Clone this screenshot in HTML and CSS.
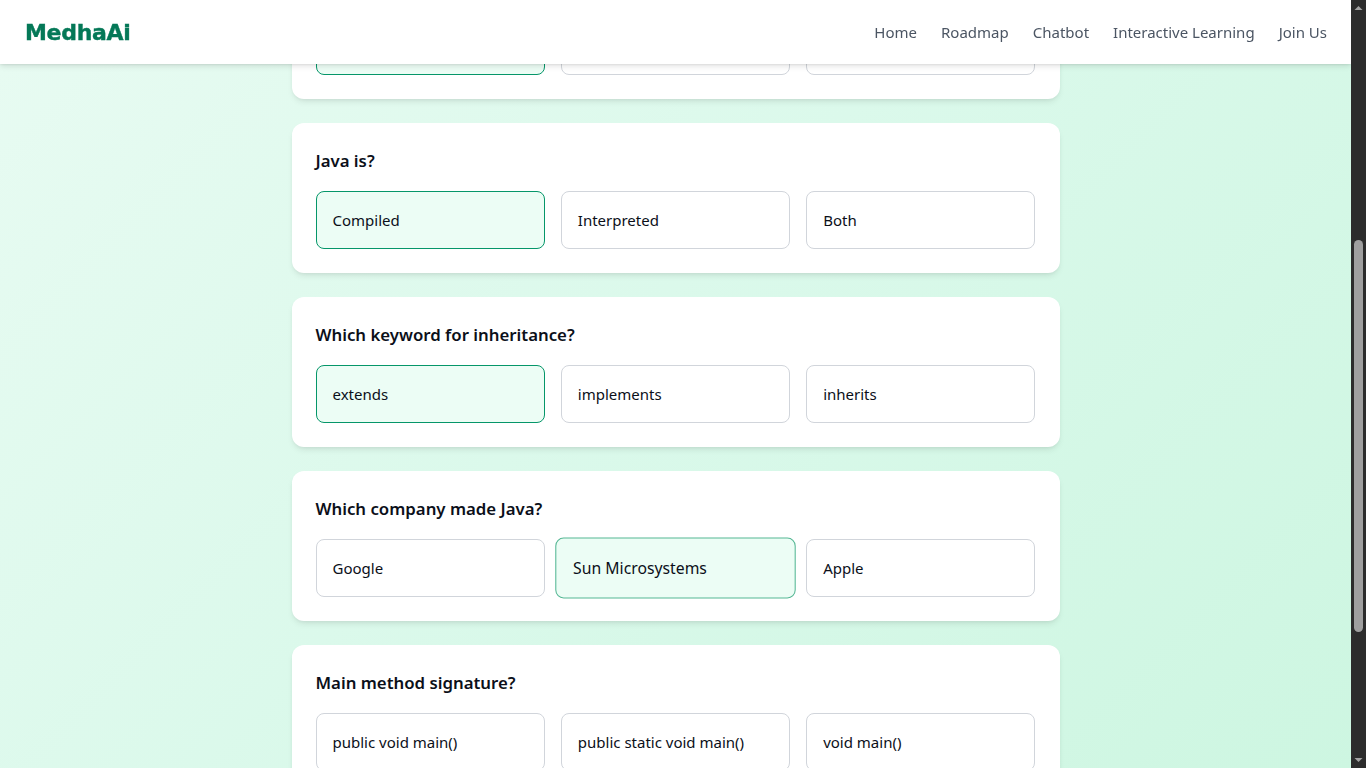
FILE: index.html
```html
<!DOCTYPE html>
<html lang="en">
<head>
<meta charset="utf-8">
<title>MedhaAi – Java Quiz</title>
<link rel="stylesheet" href="styles.css">
</head>
<body>
<header class="navbar">
  <div class="logo">MedhaAi</div>
  <nav class="nav-links">
    <a href="#">Home</a>
    <a href="#">Roadmap</a>
    <a href="#">Chatbot</a>
    <a href="#">Interactive Learning</a>
    <a href="#">Join Us</a>
  </nav>
</header>
<main class="quiz">
  <section class="question-card">
    <h2 class="question">What does JVM stand for?</h2>
    <div class="options">
      <button class="option selected">Java Virtual Machine</button>
      <button class="option">Java Variable Method</button>
      <button class="option">Java Visual Model</button>
    </div>
  </section>
  <section class="question-card">
    <h2 class="question">Java is?</h2>
    <div class="options">
      <button class="option selected">Compiled</button>
      <button class="option">Interpreted</button>
      <button class="option">Both</button>
    </div>
  </section>
  <section class="question-card">
    <h2 class="question">Which keyword for inheritance?</h2>
    <div class="options">
      <button class="option selected">extends</button>
      <button class="option">implements</button>
      <button class="option">inherits</button>
    </div>
  </section>
  <section class="question-card">
    <h2 class="question">Which company made Java?</h2>
    <div class="options">
      <button class="option">Google</button>
      <button class="option selected hovered">Sun Microsystems</button>
      <button class="option">Apple</button>
    </div>
  </section>
  <section class="question-card">
    <h2 class="question">Main method signature?</h2>
    <div class="options">
      <button class="option">public void main()</button>
      <button class="option">public static void main()</button>
      <button class="option">void main()</button>
    </div>
  </section>
</main>
<div class="scrollbar" aria-hidden="true">
  <svg class="scroll-arrow" width="15" height="15" viewBox="0 0 15 15"><path d="M3.5 10 L7.5 6 L11.5 10 Z" fill="#a3a3a3"/></svg>
  <div class="scroll-thumb"></div>
  <svg class="scroll-arrow down" width="15" height="15" viewBox="0 0 15 15"><path d="M3.5 5 L7.5 9 L11.5 5 Z" fill="#a3a3a3"/></svg>
</div>
<script src="script.js"></script>
</body>
</html>
```

FILE: styles.css
```css
* { box-sizing: border-box; }

body {
  margin: 0;
  padding-right: 15px;
  font-family: "Noto Sans", "Open Sans", sans-serif;
  color: #111827;
  background: linear-gradient(135deg, #e8fbf2 0%, #dbf9eb 45%, #cdf6e1 100%) fixed;
  min-height: 100vh;
}

.navbar {
  position: fixed;
  top: 0;
  left: 0;
  right: 15px;
  height: 64px;
  background: #ffffff;
  display: flex;
  align-items: center;
  justify-content: space-between;
  padding: 0 24px 0 25px;
  box-shadow: 0 2px 6px rgba(0, 0, 0, 0.12), 0 1px 2px rgba(0, 0, 0, 0.06);
  z-index: 10;
}

.logo {
  font-family: "DejaVu Sans", Verdana, sans-serif;
  font-weight: 700;
  font-size: 22px;
  letter-spacing: -0.3px;
  color: #047857;
  -webkit-text-stroke: 0.4px #047857;
}

.nav-links {
  display: flex;
  gap: 24px;
}

.nav-links a {
  color: #4b5563;
  text-decoration: none;
  font-size: 15px;
  line-height: 24px;
}

.quiz {
  width: 768px;
  margin: 0 auto;
  padding: 390px 0 210px;
  display: flex;
  flex-direction: column;
  gap: 24px;
}

.question-card {
  background: #ffffff;
  border-radius: 12px;
  padding: 24px;
  box-shadow: 0 4px 6px -1px rgba(0, 0, 0, 0.08), 0 2px 4px -2px rgba(0, 0, 0, 0.08);
}

.question {
  margin: 0 0 16px;
  font-size: 16.8px;
  line-height: 28px;
  font-weight: 600;
  color: #0b0f19;
}

.options {
  display: grid;
  grid-template-columns: repeat(3, 1fr);
  gap: 16px;
}

.option {
  font-family: inherit;
  font-size: 15px;
  line-height: 24px;
  color: #0b0f19;
  text-align: left;
  padding: 16px;
  background: #ffffff;
  border: 1px solid #d1d5db;
  border-radius: 8px;
  cursor: pointer;
}

.option.selected {
  background: #ecfdf5;
  border-color: #059669;
}

.option.hovered {
  transform: scale(1.05);
  border-color: #55b794;
}

/* drawn window scrollbar (overlay on the right edge) */
.scrollbar {
  position: fixed;
  top: 0;
  right: 0;
  bottom: 0;
  width: 15px;
  background: #2c2c2c;
  display: flex;
  flex-direction: column;
  z-index: 20;
}

.scroll-arrow {
  display: block;
  flex: none;
}

.scroll-arrow.down {
  margin-top: auto;
}

.scroll-thumb {
  margin: 225px 3px 0;
  height: 392px;
  background: #9f9f9f;
  border-radius: 5px;
}
```

FILE: script.js
```js
window.scrollTo(0, 441);
```
